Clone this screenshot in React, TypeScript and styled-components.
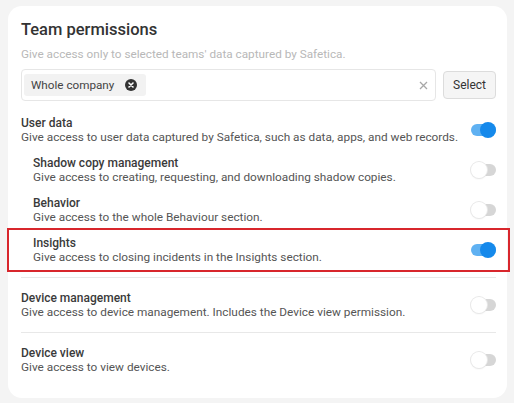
import React, { useState } from 'react'
import styled, { createGlobalStyle } from 'styled-components'

const GlobalStyle = createGlobalStyle`
  html, body {
    margin: 0;
    padding: 0;
    background: #f4f4f4;
  }
  body {
    font-family: Roboto, Inter, "Liberation Sans", sans-serif;
    color: #333;
  }
  * {
    box-sizing: border-box;
  }
`

const Page = styled.div`
  padding: 6px 7px 6px 8px;
`

const Card = styled.div`
  background: #fff;
  border-radius: 14px;
  padding: 13px 11px 11px 13px;
`

const Title = styled.h2`
  margin: 0;
  font-size: 16.5px;
  line-height: 22px;
  font-weight: 500;
  color: #333;
`

const Subtitle = styled.p`
  margin: 5px 0 0;
  font-size: 11.75px;
  line-height: 16px;
  color: #b8b8b8;
`

const PickerRow = styled.div`
  display: flex;
  align-items: center;
  gap: 7px;
  margin-top: 7px;
`

const TagInput = styled.div`
  flex: 1;
  height: 32px;
  display: flex;
  align-items: center;
  padding: 0 7px 0 2px;
  border: 1px solid #e6e6e6;
  border-radius: 4px;
`

const Chip = styled.span`
  display: inline-flex;
  align-items: center;
  gap: 11px;
  height: 22px;
  padding: 0 9px 0 7px;
  background: #f2f2f2;
  border-radius: 3px;
  font-size: 11.7px;
  color: #444;
`

const ClearButton = styled.span`
  margin-left: auto;
  display: flex;
  align-items: center;
`

const SelectButton = styled.button`
  width: 53px;
  height: 28px;
  padding: 0;
  background: #f5f5f5;
  border: 1px solid #dcdcdc;
  border-radius: 4px;
  font-family: inherit;
  font-size: 12px;
  color: #333;
`

const Section = styled.div<{ $first?: boolean; $last?: boolean }>`
  padding: ${(p) => (p.$first ? '9px 0 7px' : '7px 0')};
  border-bottom: ${(p) => (p.$last ? 'none' : '1px solid #e8e8e8')};
`

const Row = styled.div<{ $indent?: boolean }>`
  position: relative;
  display: flex;
  align-items: center;
  justify-content: space-between;
  padding: 6px 0 6px ${(p) => (p.$indent ? '12px' : '0')};
`

const Highlight = styled.div`
  position: absolute;
  top: -2px;
  bottom: -2px;
  left: -14px;
  right: -14px;
  border: 2px solid #d8262c;
  pointer-events: none;
`

const Texts = styled.div`
  display: flex;
  flex-direction: column;
`

const ItemTitle = styled.span`
  font-size: 12px;
  line-height: 14px;
  font-weight: 500;
  color: #3a3a3a;
`

const ItemDesc = styled.span`
  font-size: 11.8px;
  line-height: 14px;
  color: #555;
`

const Track = styled.button<{ $on: boolean }>`
  position: relative;
  flex: none;
  width: 25px;
  height: 16px;
  padding: 0;
  border: none;
  background: transparent;
  cursor: pointer;

  &::before {
    content: '';
    position: absolute;
    left: 0;
    right: 0;
    top: 2px;
    height: 12px;
    border-radius: 6px;
    background: ${(p) => (p.$on ? '#5fb1f2' : '#d6d6d6')};
  }
`

const Knob = styled.span<{ $on: boolean }>`
  position: absolute;
  top: 0;
  left: ${(p) => (p.$on ? '9px' : '0')};
  width: 16px;
  height: 16px;
  border-radius: 50%;
  background: ${(p) => (p.$on ? '#1589eb' : '#fff')};
  box-shadow: ${(p) => (p.$on ? 'none' : '0 0 0 1px #e8e8e8, 0 1px 2px rgba(0,0,0,0.08)')};
`

function Toggle({ initial }: { initial: boolean }) {
  const [on, setOn] = useState(initial)
  return (
    <Track $on={on} onClick={() => setOn(!on)} aria-pressed={on}>
      <Knob $on={on} />
    </Track>
  )
}

function Permission({
  title,
  desc,
  on,
  indent,
  highlighted,
}: {
  title: string
  desc: string
  on: boolean
  indent?: boolean
  highlighted?: boolean
}) {
  return (
    <Row $indent={indent}>
      <Texts>
        <ItemTitle>{title}</ItemTitle>
        <ItemDesc>{desc}</ItemDesc>
      </Texts>
      <Toggle initial={on} />
      {highlighted && <Highlight />}
    </Row>
  )
}

export default function App() {
  return (
    <Page>
      <GlobalStyle />
      <Card>
        <Title>Team permissions</Title>
        <Subtitle>Give access only to selected teams' data captured by Safetica.</Subtitle>
        <PickerRow>
          <TagInput>
            <Chip>
              Whole company
              <svg width="12" height="12" viewBox="0 0 12 12">
                <circle cx="6" cy="6" r="6" fill="#333" />
                <path d="M4 4l4 4M8 4l-4 4" stroke="#fff" strokeWidth="1.6" strokeLinecap="round" />
              </svg>
            </Chip>
            <ClearButton>
              <svg width="9" height="9" viewBox="0 0 9 9">
                <path d="M1 1l7 7M8 1l-7 7" stroke="#a8a8a8" strokeWidth="1.3" />
              </svg>
            </ClearButton>
          </TagInput>
          <SelectButton>Select</SelectButton>
        </PickerRow>

        <Section $first>
          <Permission
            title="User data"
            desc="Give access to user data captured by Safetica, such as data, apps, and web records."
            on
          />
          <Permission
            indent
            title="Shadow copy management"
            desc="Give access to creating, requesting, and downloading shadow copies."
            on={false}
          />
          <Permission
            indent
            title="Behavior"
            desc="Give access to the whole Behaviour section."
            on={false}
          />
          <Permission
            indent
            highlighted
            title="Insights"
            desc="Give access to closing incidents in the Insights section."
            on
          />
        </Section>
        <Section>
          <Permission
            title="Device management"
            desc="Give access to device management. Includes the Device view permission."
            on={false}
          />
        </Section>
        <Section $last>
          <Permission title="Device view" desc="Give access to view devices." on={false} />
        </Section>
      </Card>
    </Page>
  )
}
